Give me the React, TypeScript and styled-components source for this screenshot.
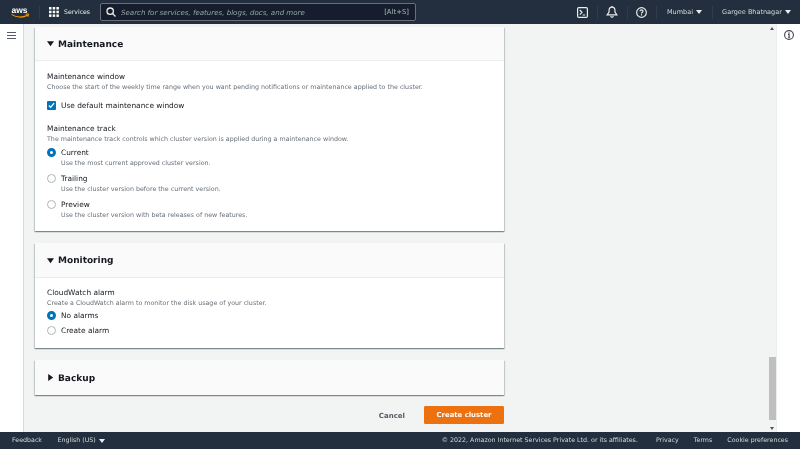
import React from "react";
import styled, { createGlobalStyle } from "styled-components";

const GlobalStyle = createGlobalStyle`
  html, body { margin: 0; padding: 0; height: 100%; overflow: hidden; }
  body { font-family: "DejaVu Sans", "Noto Sans", sans-serif; color: #16191f; background: #fff; text-rendering: geometricPrecision; }
  #root { height: 449px; }
  * { box-sizing: border-box; }
`;

const Page = styled.div`
  width: 800px;
  height: 449px;
  display: flex;
  flex-direction: column;
  will-change: transform;
`;

const TopBar = styled.header`
  height: 24px;
  flex: none;
  background: #232f3e;
  display: flex;
  align-items: center;
  color: #d5dbdb;
  font-size: 6.5px;
`;

const Logo = styled.div`
  width: 39px;
  padding-left: 11px;
  display: flex;
  align-items: center;
`;

const Divider = styled.span`
  width: 1px;
  height: 13px;
  background: #2f3c4c;
`;

const ServicesBtn = styled.div`
  display: flex;
  align-items: center;
  gap: 5px;
  margin-left: 9px;
  width: 51px;
  font-size: 6.2px;
  color: #eaeded;
`;

const SearchBox = styled.div`
  width: 316px;
  height: 18px;
  background: #161e2d;
  border: 1px solid #687078;
  border-radius: 2px;
  display: flex;
  align-items: center;
  padding: 0 6px 0 5px;
  gap: 5px;
`;

const SearchText = styled.span`
  flex: 1;
  font-style: italic;
  font-size: 7.05px;
  color: #95a5a6;
`;

const Hotkey = styled.span`
  font-size: 6.9px;
  color: #aab7b8;
`;

const TopRight = styled.div`
  margin-left: auto;
  display: flex;
  align-items: center;
  height: 100%;
`;

const IconCell = styled.div`
  width: 28.5px;
  display: flex;
  justify-content: center;
  align-items: center;
`;

const MenuLabel = styled.div<{ $w: number }>`
  width: ${(p) => p.$w}px;
  display: flex;
  align-items: center;
  justify-content: center;
  gap: 3px;
  color: #d5dbdb;
`;

const Caret = styled.i`
  display: inline-block;
  width: 0;
  height: 0;
  border-left: 3px solid transparent;
  border-right: 3px solid transparent;
  border-top: 4px solid #eaeded;
`;

const Body = styled.div`
  flex: 1;
  min-height: 0;
  display: flex;
`;

const LeftRail = styled.aside`
  width: 24px;
  flex: none;
  background: #fff;
  border-right: 1px solid #d5dbdb;
  display: flex;
  justify-content: center;
  align-items: flex-start;
  padding-top: 8px;
  color: #545b64;
`;

const Main = styled.main`
  flex: 1;
  min-width: 0;
  background: #f2f3f3;
  padding: 3px 0 0 11px;
`;

const Card = styled.section`
  width: 469px;
  background: #fff;
  box-shadow: 0 1px 1px 0 rgba(0, 28, 36, 0.3), 1px 1px 1px 0 rgba(0, 28, 36, 0.15), -1px 1px 1px 0 rgba(0, 28, 36, 0.15);
  margin-bottom: 12px;
`;

const CardHeader = styled.div<{ $h: number; $open?: boolean }>`
  height: ${(p) => p.$h}px;
  background: #fafafa;
  border-bottom: ${(p) => (p.$open ? "1px solid #eaeded" : "none")};
  display: flex;
  align-items: center;
  padding-left: 12px;
  gap: 4px;
`;

const Title = styled.h2`
  margin: 0;
  padding-top: 2px;
  font-size: 9px;
  font-weight: 700;
  color: #16191f;
`;

const CardBody = styled.div<{ $h: number; $top: number }>`
  height: ${(p) => p.$h}px;
  padding: ${(p) => p.$top}px 12px 0;
`;

const FieldLabel = styled.div`
  font-size: 7.4px;
  line-height: 11px;
  color: #16191f;
`;

const FieldHint = styled.div`
  padding-top: 1px;
  margin-bottom: -1px;
  font-size: 6.33px;
  line-height: 10px;
  color: #687078;
`;

const Choice = styled.div<{ $h: number }>`
  height: ${(p) => p.$h}px;
  display: grid;
  grid-template-columns: 14px 1fr;
  align-content: start;
`;

const ChoiceMark = styled.div`
  height: 11px;
  display: flex;
  align-items: center;
`;

const ChoiceLabel = styled.div`
  font-size: 7.4px;
  line-height: 12px;
  color: #16191f;
`;

const ChoiceHint = styled(FieldHint)`
  grid-column: 2;
  margin-top: -1px;
`;

const Radio = styled.span<{ $on?: boolean }>`
  width: 9px;
  height: 9px;
  border-radius: 50%;
  background: #fff;
  border: ${(p) => (p.$on ? "3px solid #0073bb" : "1px solid #aab7b8")};
`;

const Checkbox = styled.span`
  width: 9px;
  height: 9px;
  border-radius: 1px;
  background: #0073bb;
  display: flex;
  align-items: center;
  justify-content: center;
`;

const Gap = styled.div<{ $h: number }>`
  height: ${(p) => p.$h}px;
`;

const Actions = styled.div`
  width: 469px;
  display: flex;
  justify-content: flex-end;
  align-items: center;
  margin-top: -1px;
`;

const CancelBtn = styled.span`
  margin: 1px 19px 0 0;
  font-size: 7px;
  font-weight: 700;
  color: #545b64;
`;

const PrimaryBtn = styled.button`
  width: 80px;
  height: 18px;
  padding: 0;
  border: 1px solid #ec7211;
  border-radius: 1px;
  background: #ec7211;
  color: #fff;
  font-family: inherit;
  font-size: 6.9px;
  font-weight: 700;
`;

const ScrollTrack = styled.div`
  width: 9px;
  flex: none;
  background: #f2f3f3;
  display: flex;
  flex-direction: column;
  align-items: center;
  justify-content: space-between;
  padding: 3px 0 2px;
`;

const Thumb = styled.div`
  width: 7px;
  height: 63px;
  align-self: flex-end;
  margin-top: auto;
  margin-bottom: 7px;
  background: #bfbfbf;
`;

const Arrow = styled.i<{ $down?: boolean }>`
  display: block;
  width: 0;
  height: 0;
  border-left: 2px solid transparent;
  border-right: 2px solid transparent;
  ${(p) => (p.$down ? "border-top: 3px solid #505050;" : "border-bottom: 3px solid #505050;")}
`;

const RightRail = styled.aside`
  width: 24px;
  flex: none;
  background: #fff;
  border-left: 1px solid #eaeded;
  display: flex;
  justify-content: center;
  padding-top: 6px;
`;

const Footer = styled.footer`
  height: 17px;
  flex: none;
  background: #232f3e;
  display: flex;
  align-items: center;
  font-size: 6.3px;
  color: #d5dbdb;
  padding: 0 12px;
`;

const FootLang = styled.span`
  margin-left: 15.5px;
  display: flex;
  align-items: center;
  gap: 3px;
`;

const FootRight = styled.div`
  margin-left: auto;
  display: flex;
  gap: 15px;
`;

const Copyright = styled.span`
  margin-right: 3px;
`;

const AwsLogo = () => (
  <svg width="19" height="13" viewBox="0 0 19 13" fill="none">
    <text x="0.5" y="7" fontFamily="Liberation Sans, sans-serif" fontWeight="700" fontSize="8.5" fill="#fff">aws</text>
    <path d="M1 8.6c4.5 3.2 11 3.2 15.5.6" stroke="#ff9900" strokeWidth="1.1" strokeLinecap="round" />
    <path d="M15 8.2l2.6-.3-.6 2.5" stroke="#ff9900" strokeWidth="1" strokeLinecap="round" />
  </svg>
);

const GridIcon = () => (
  <svg width="10" height="10" viewBox="0 0 10 10" fill="#fff">
    {[0, 3.7, 7.4].flatMap((y) =>
      [0, 3.7, 7.4].map((x) => <rect key={`${x}-${y}`} x={x} y={y} width="2.5" height="2.5" />)
    )}
  </svg>
);

const SearchIcon = () => (
  <svg width="10" height="10" viewBox="0 0 10 10" fill="none" stroke="#eaeded" strokeWidth="1.3">
    <circle cx="4.2" cy="4.2" r="3.2" />
    <path d="M6.6 6.6l2.9 2.9" />
  </svg>
);

const TerminalIcon = () => (
  <svg width="11" height="11" viewBox="0 0 11 11" fill="none" stroke="#eaeded" strokeWidth="1.2">
    <rect x="0.6" y="0.6" width="9.8" height="9.8" rx="1.2" />
    <path d="M2.8 3l2.2 2.3-2.2 2.3M5.6 8h2.6" />
  </svg>
);

const BellIcon = () => (
  <svg width="12" height="12" viewBox="0 0 11 11" fill="none" stroke="#eaeded" strokeWidth="1.1">
    <path d="M5.5 1c-1.8 0-2.7 1.3-2.7 3v1.6L1 8.2h9L8.2 5.6V4c0-1.7-.9-3-2.7-3z" />
    <path d="M4.2 9.3c.3.6.7.9 1.3.9s1-.3 1.3-.9M5.5 0v1" />
  </svg>
);

const HelpIcon = () => (
  <svg width="11" height="11" viewBox="0 0 10 10" fill="none" stroke="#eaeded" strokeWidth="1.1">
    <circle cx="5" cy="5" r="4.4" />
    <path d="M3.6 3.9C3.7 3 4.2 2.6 5 2.6s1.4.5 1.4 1.2c0 1-1.4 1-1.4 2.1M5 6.7v1" />
  </svg>
);

const InfoIcon = () => (
  <svg width="10" height="10" viewBox="0 0 10 10" fill="none" stroke="#414750" strokeWidth="1.1">
    <circle cx="5" cy="5" r="4.4" />
    <path d="M4 4.4h1.1v2.8M4 7.3h2.2M5 2.3v1.1" />
  </svg>
);

const MenuIcon = () => (
  <svg width="9" height="7" viewBox="0 0 9 7" stroke="#545b64" strokeWidth="1">
    <path d="M0 .5h9M0 3.5h9M0 6.5h9" />
  </svg>
);

const Tri = ({ right }: { right?: boolean }) => (
  <svg width="7" height="7" viewBox="0 0 7 7" fill="#16191f">
    {right ? <path d="M1.2 0l5 3.5-5 3.5z" /> : <path d="M0 1.2h7L3.5 6.2z" />}
  </svg>
);

const CheckMark = () => (
  <svg width="7" height="7" viewBox="0 0 6 6" fill="none" stroke="#fff" strokeWidth="1.1">
    <path d="M.8 3l1.5 1.6L5.2 1" />
  </svg>
);

const tracks = [
  { label: "Current", hint: "Use the most current approved cluster version.", on: true },
  { label: "Trailing", hint: "Use the cluster version before the current version." },
  { label: "Preview", hint: "Use the cluster version with beta releases of new features." },
];

const App = () => (
  <Page>
    <GlobalStyle />
    <TopBar>
      <Logo><AwsLogo /></Logo>
      <Divider />
      <ServicesBtn><GridIcon />Services</ServicesBtn>
      <SearchBox>
        <SearchIcon />
        <SearchText>Search for services, features, blogs, docs, and more</SearchText>
        <Hotkey>[Alt+S]</Hotkey>
      </SearchBox>
      <TopRight>
        <IconCell><TerminalIcon /></IconCell>
        <Divider />
        <IconCell><BellIcon /></IconCell>
        <Divider />
        <IconCell><HelpIcon /></IconCell>
        <Divider />
        <MenuLabel $w={55}>Mumbai <Caret /></MenuLabel>
        <Divider />
        <MenuLabel $w={87}>Gargee Bhatnagar <Caret /></MenuLabel>
      </TopRight>
    </TopBar>
    <Body>
      <LeftRail><MenuIcon /></LeftRail>
      <Main>
        <Card>
          <CardHeader $h={34} $open><Tri /><Title>Maintenance</Title></CardHeader>
          <CardBody $h={170} $top={10}>
            <FieldLabel>Maintenance window</FieldLabel>
            <FieldHint>Choose the start of the weekly time range when you want pending notifications or maintenance applied to the cluster.</FieldHint>
            <Gap $h={8} />
            <Choice $h={23}>
              <ChoiceMark><Checkbox><CheckMark /></Checkbox></ChoiceMark>
              <ChoiceLabel>Use default maintenance window</ChoiceLabel>
            </Choice>
            <FieldLabel>Maintenance track</FieldLabel>
            <FieldHint>The maintenance track controls which cluster version is applied during a maintenance window.</FieldHint>
            <Gap $h={3} />
            {tracks.map((t) => (
              <Choice $h={26.2} key={t.label}>
                <ChoiceMark><Radio $on={t.on} /></ChoiceMark>
                <ChoiceLabel>{t.label}</ChoiceLabel>
                <ChoiceHint>{t.hint}</ChoiceHint>
              </Choice>
            ))}
          </CardBody>
        </Card>
        <Card>
          <CardHeader $h={35} $open><Tri /><Title>Monitoring</Title></CardHeader>
          <CardBody $h={70} $top={9}>
            <FieldLabel>CloudWatch alarm</FieldLabel>
            <FieldHint>Create a CloudWatch alarm to monitor the disk usage of your cluster.</FieldHint>
            <Gap $h={2} />
            <Choice $h={14.6}>
              <ChoiceMark><Radio $on /></ChoiceMark>
              <ChoiceLabel>No alarms</ChoiceLabel>
            </Choice>
            <Choice $h={14.6}>
              <ChoiceMark><Radio /></ChoiceMark>
              <ChoiceLabel>Create alarm</ChoiceLabel>
            </Choice>
          </CardBody>
        </Card>
        <Card>
          <CardHeader $h={35}><Tri right /><Title>Backup</Title></CardHeader>
        </Card>
        <Actions>
          <CancelBtn>Cancel</CancelBtn>
          <PrimaryBtn>Create cluster</PrimaryBtn>
        </Actions>
      </Main>
      <ScrollTrack>
        <Arrow />
        <Thumb />
        <Arrow $down />
      </ScrollTrack>
      <RightRail><InfoIcon /></RightRail>
    </Body>
    <Footer>
      <span>Feedback</span>
      <FootLang>English (US) <Caret /></FootLang>
      <FootRight>
        <Copyright>© 2022, Amazon Internet Services Private Ltd. or its affiliates.</Copyright>
        <span>Privacy</span>
        <span>Terms</span>
        <span>Cookie preferences</span>
      </FootRight>
    </Footer>
  </Page>
);

export default App;
